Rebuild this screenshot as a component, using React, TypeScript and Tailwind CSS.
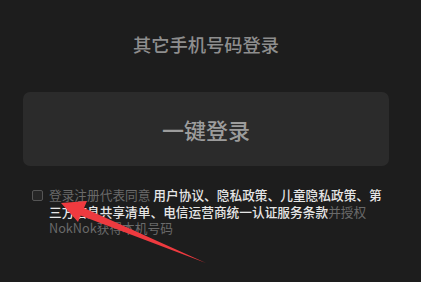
import React from "react";

export default function App() {
  return (
    <div
      className="relative w-[421px] h-[282px] overflow-hidden bg-[#1d1d1d] flex flex-col"
      style={{ fontFamily: '"Noto Sans CJK SC", "Noto Sans", sans-serif' }}
    >
      <div className="mt-[32px] ml-[23px] w-[366px] h-[24px] leading-[24px] text-center text-[18.3px] text-[#8e8e8e] font-medium">
        其它手机号码登录
      </div>
      <div className="mt-[36px] ml-[23px] w-[366px] h-[74px] rounded-[7px] bg-[#2b2b2b] flex items-center justify-center">
        <span className="text-[22px] leading-none text-[#9c9c9c] font-medium">一键登录</span>
      </div>
      <div className="mt-[21px] pl-[32px] flex items-start">
        <div className="mt-[3px] w-[11px] h-[11px] rounded-[2px] border border-[#555] bg-[#262626] shrink-0" />
        <p className="ml-[6px] w-[342px] text-[12.7px] leading-[16.5px] text-[#6a6a6a]">
          登录注册代表同意{" "}
          <span className="text-[#e6e6e6] font-medium">
            用户协议、隐私政策、儿童隐私政策、第三方信息共享清单、电信运营商统一认证服务条款
          </span>
          并授权NokNok获得本机号码
        </p>
      </div>
      <svg
        className="absolute left-0 top-0 pointer-events-none"
        width="421"
        height="282"
        viewBox="0 0 421 282"
      >
        <polygon
          points="61,203 87,201 84,208 206,263 80.5,215.5 78,222"
          fill="#ee3a3f"
        />
      </svg>
    </div>
  );
}
